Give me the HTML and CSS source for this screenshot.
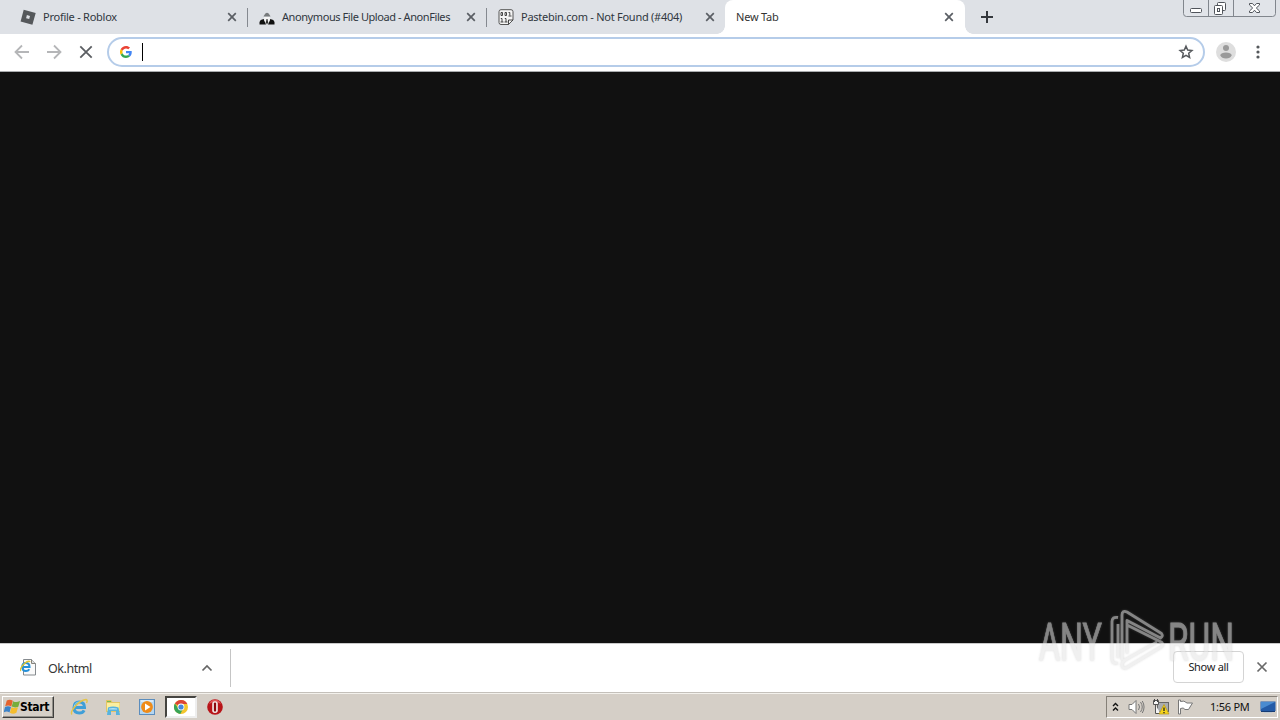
FILE: index.html
```html
<!DOCTYPE html>
<html lang="en">
<head>
<meta charset="utf-8">
<title>New Tab</title>
<link rel="stylesheet" href="styles.css">
</head>
<body>
<div class="screen">
  <header class="tabstrip">
    <div class="tab first">
      <svg class="favicon" viewBox="0 0 16 16"><path fill="#55585b" fill-rule="evenodd" d="M3.7.7 15.7 4 12.4 15.7.6 12.5zM6.9 6.1 6.1 9.2l3.1.8.8-3.1z"/></svg>
      <span class="title t-roblox">Profile - Roblox</span>
      <svg class="close" viewBox="0 0 10 10"><path d="M1.2 1.2l7.6 7.6M8.8 1.2L1.2 8.8"/></svg>
    </div>
    <div class="tab">
      <svg class="favicon" viewBox="0 0 16 16"><path fill="#111" d="M.5 15.500v-2.500l1.200-2 3-1L7 15.500zM15.500 15.500v-2.500l-1.200-2-3-1L9 15.500z"/><path fill="#f4f4f4" d="M5 8h6l-.5 4L8 15.500 5.500 12z"/><path fill="#777a7c" d="M5.300 6Q8 1.500 10.700 6l.8 1.500h-7z"/><path fill="#333" d="M7.500 10h1l.7 3.500L8 15.500l-1.200-2z"/></svg>
      <span class="title t-anon">Anonymous File Upload - AnonFiles</span>
      <svg class="close" viewBox="0 0 10 10"><path d="M1.200 1.200l7.600 7.600M8.800 1.200L1.200 8.800"/></svg>
    </div>
    <div class="tab last">
      <svg class="favicon" viewBox="0 0 16 16"><path fill="#f5f5f5" stroke="#555" d="M3 .7h10q2 0 2 2V11l-4.500 4.500H3q-2 0-2-2V2.700q0-2 2-2z"/><path fill="none" stroke="#333" stroke-width=".9" d="M3 3.500h1.500v3H3zM7 3.500h1.500v3H7zM10.500 3.500h1.300v3M10.500 7h3M2.800 9.500H4v3.500M2.500 13h3M6.800 9.500H8v3.500M6.500 13h3M10.500 15.500V11H15"/></svg>
      <span class="title t-paste">Pastebin.com - Not Found (#404)</span>
      <svg class="close" viewBox="0 0 10 10"><path d="M1.200 1.200l7.600 7.600M8.800 1.200L1.200 8.800"/></svg>
    </div>
    <div class="tab active">
      <span class="title t-new">New Tab</span>
      <svg class="close" viewBox="0 0 10 10"><path d="M1.200 1.200l7.600 7.600M8.800 1.200L1.200 8.800"/></svg>
    </div>
    <svg class="plus" viewBox="0 0 12 12"><path d="M6 0v12M0 6h12"/></svg>
    <svg class="winctl" viewBox="0 0 94 18"><path fill="#e1e4e9" stroke="#81868d" d="M.5-1v14.500q0 3 3 3h86q3 0 3-3V-1zM25.500 0v16M50.500 0v16"/><g fill="#fff" stroke="#50545b"><rect x="7.500" y="8.500" width="11" height="4" rx="1"/><rect x="34.500" y="2.500" width="8" height="8" rx="1"/><rect x="31.500" y="5.500" width="8" height="9" rx="1"/><rect x="34.500" y="8.500" width="2" height="3"/><path d="M66.500 3.500h3l2 2.300 2-2.300h3v1.500l-3.200 3 3.200 3v1.500h-3l-2-2.300-2 2.300h-3V11l3.200-3-3.200-3z"/></g></svg>
  </header>
  <div class="toolbar">
    <svg class="nav" viewBox="0 0 16 16"><path stroke="#b5b6b8" d="M15 8H2M8 1.500L1.500 8 8 14.500"/></svg>
    <svg class="nav" viewBox="0 0 16 16"><path stroke="#b5b6b8" d="M1 8h13M8 1.500L14.500 8 8 14.500"/></svg>
    <svg class="nav" viewBox="0 0 16 16"><path stroke="#5b5e62" d="M2.300 2.300l11.400 11.400M13.700 2.300L2.300 13.700"/></svg>
    <div class="omnibox">
      <svg class="google" viewBox="0 0 48 48"><path fill="#ea4335" d="M24 9.500c3.540 0 6.710 1.220 9.210 3.600l6.850-6.850C35.900 2.380 30.470 0 24 0 14.620 0 6.510 5.380 2.560 13.220l7.980 6.190C12.430 13.720 17.740 9.500 24 9.500z"/><path fill="#4285f4" d="M46.980 24.550c0-1.570-.15-3.090-.38-4.550H24v9.020h12.940c-.58 2.960-2.260 5.480-4.780 7.180l7.730 6c4.510-4.180 7.090-10.360 7.090-17.650z"/><path fill="#fbbc05" d="M10.530 28.590A14.500 14.500 0 0 1 10.530 19.410l-7.980-6.190A24 24 0 0 0 2.560 34.780z"/><path fill="#34a853" d="M24 48c6.480 0 11.930-2.130 15.890-5.810l-7.730-6c-2.150 1.450-4.920 2.300-8.160 2.300-6.260 0-11.570-4.220-13.470-9.910l-7.980 6.190C6.510 42.620 14.620 48 24 48z"/></svg>
      <span class="caret"></span>
      <svg class="star" viewBox="0 0 16 16"><path d="M8 2.200l1.700 3.900 4.200.4-3.200 2.800.9 4.200L8 11.300l-3.600 2.200.9-4.200-3.200-2.800 4.200-.4z"/></svg>
    </div>
    <svg class="avatar" viewBox="0 0 20 20"><circle cx="10" cy="10" r="10" fill="#dedede"/><circle cx="10" cy="5.900" r="3" fill="#9a9a9a"/><path fill="#9a9a9a" d="M4.200 13.200q1-2.700 5.800-2.700t5.800 2.700q-1.500 3.300-5.800 3.300t-5.800-3.300z"/></svg>
    <svg class="dots" viewBox="0 0 4 14"><circle cx="2" cy="2" r="1.600"/><circle cx="2" cy="7" r="1.600"/><circle cx="2" cy="12" r="1.600"/></svg>
  </div>
  <main class="page"></main>
  <section class="shelf">
    <div class="download">
      <svg class="file" viewBox="0 0 17 17"><path fill="#fafafa" stroke="#858a8e" d="M3.500.5h8l4 4v11.500h-12z"/><path fill="#ddd" stroke="#85837c" d="M11.500.5v4h4"/><path fill="none" stroke="#2490d9" stroke-width="2.100" d="M2.500 8h7q0-4-3.600-4T2.300 8q0 4 3.600 4 2.300 0 3.400-1.700"/><path fill="none" stroke="#e1c52e" stroke-width="1.300" d="M1 12q-2-1.500 2.500-6.500Q8 1 10.200 2.700"/></svg>
      <span class="fname">Ok.html</span>
      <svg class="chev" viewBox="0 0 12 8"><path d="M1.500 6.500L6 2l4.500 4.500"/></svg>
    </div>
    <button class="showall">Show all</button>
    <svg class="shelfx" viewBox="0 0 12 12"><path d="M1.500 1.500l9 9M10.500 1.500l-9 9"/></svg>
  </section>
  <footer class="taskbar">
    <div class="start">
      <svg class="flag" viewBox="0 0 16 16"><path fill="#e5622d" d="M2.800 1.500q3-1.500 6 .2L7.300 7.500Q4.500 5.500 1.200 7.200z"/><path fill="#76ad3c" d="M9.200 2.200Q12 4 16 2l-1.700 5.700q-3.300 1.500-6.600-.1z"/><path fill="#3c83c8" d="M1 8q3-1.600 6 0l-1.500 5.500Q2.700 11.700-.4 13.500z"/><path fill="#f5bd2d" d="M7.500 8.300q3 1.500 6.500 0l-1.600 5.500q-3.300 1.700-6.500 0z"/></svg>
      <span>Start</span>
    </div>
    <svg class="app" viewBox="0 0 18 18"><path fill="none" stroke="#3f9fd8" stroke-width="3" d="M4 9.500h10.500Q14.500 4 9.300 4T4 9.500Q4 15 9.300 15q3.500 0 4.800-2.700"/><path fill="none" stroke="#96d9f1" d="M4 9q1-5 5.500-5"/><path fill="none" stroke="#e5c447" stroke-width="1.400" d="M2 16.500q-2-2 3-8t11-7q2 .5.500 3.500"/></svg>
    <svg class="app" viewBox="0 0 18 18"><path fill="#e3c566" d="M2 2h5l1.500 2H16v10H2z"/><path fill="#fbef9f" d="M3 5h12.500v8H3z"/><path fill="#76bc53" d="M3 3h4v1H3z"/><path fill="#57b3de" d="M4 9.500q5-2 10.500 0L16 17h-4v-4H7v4H3z"/><path fill="#b7e3f3" d="M5 10.500q4-1 8 0v1H5z"/></svg>
    <svg class="app" viewBox="0 0 18 18"><rect x="1.500" y="1.500" width="15" height="15" fill="#b4d6f1" stroke="#5b8dbd"/><path stroke="#fff" d="M3 3h12"/><circle cx="9" cy="9" r="5.900" fill="#ef8b18"/><path fill="#fff" d="M7 5.500l5.500 3.500L7 12.500z"/></svg>
    <div class="running"><svg viewBox="0 0 16 16"><circle cx="8" cy="8" r="7" fill="#f3c52d"/><path fill="#dc4435" d="M8 8L1.900 4.500A7 7 0 0 1 14.300 5H8z"/><path fill="#38a457" d="M1.900 4.500A7 7 0 0 0 7.300 15L10 10 8 8 5 9z"/><circle cx="8" cy="8" r="3.400" fill="#fff"/><circle cx="8" cy="8" r="2.600" fill="#4587dd"/></svg></div>
    <svg class="app opera" viewBox="0 0 18 18"><circle cx="9" cy="9" r="7.800" fill="#b81419"/><path fill="#df5557" d="M3 6q1.500-4.300 6-4.300T15 6Q12 4 9 4T3 6z"/><rect x="6.200" y="3.300" width="5.600" height="11.600" rx="2.600" fill="#f1e9e7"/><rect x="7.900" y="4.500" width="2.200" height="9.200" rx="1.100" fill="#8c090e"/></svg>
    <div class="tray">
      <svg class="up" viewBox="0 0 7 10"><path d="M1 4l2.500-2.500L6 4M1 8.500L3.500 6 6 8.500"/></svg>
      <svg class="ti spk" viewBox="0 0 17 16"><path fill="#fff" stroke="#777" d="M1 5.500h3l4-4v13l-4-4H1z"/><path fill="none" stroke="#777" d="M10.500 5q2 3 0 6M12.500 3q3.500 5 0 10M14.300 2q3.500 6 0 12"/></svg>
      <svg class="ti net" viewBox="0 0 17 16"><rect x="4.500" y="3.500" width="11" height="9" fill="#a9acb0" stroke="#666"/><path fill="#f5f5f5" stroke="#555" d="M.5 1.500h5v4h-5zM2.500 6v8.500h5"/><path stroke="#444" d="M1.500 0v3M4.500 0v3"/><path fill="#f6d51b" stroke="#b89714" stroke-width=".7" d="M11 5.500l5 9.500H6z"/><path stroke="#222" stroke-width="1.300" d="M11 8.500v3.500M11 13v1.200"/></svg>
      <svg class="ti act" viewBox="0 0 17 16"><path fill="#fff" stroke="#777" d="M1.500 1v14h2V9.500q3-1.500 4.500 1h3.500l4-6.500H10Q7 1 3.500 2.500V1z"/></svg>
      <span class="clock">1:56 PM</span>
      <svg class="desk" viewBox="0 0 16 13"><path fill="#245ba7" d="M.5.500h15V10H.5z"/><path fill="#4a8bd0" d="M1 1h14L1 8z"/><path fill="#173c73" d="M1 10h14v1H1z"/><path fill="#bfc8d0" d="M4 11h8v1H4z"/></svg>
    </div>
  </footer>
  <svg class="watermark" viewBox="0 0 204 72">
    <g class="wm-text"><text x="7" y="57" textLength="63" lengthAdjust="spacingAndGlyphs">ANY</text><text x="136" y="57" textLength="66" lengthAdjust="spacingAndGlyphs">RUN</text></g>
    <path class="wm-logo" d="M86 14.500q-6-1-6 4v37q0 6 6 4.500M86 21v34M90 57V12q0-5 5-3l34.500 21.500q2 2.500-1 4.500L95 17.500v33M95 22l35 17.500q2 2.500-1 4.500L94 65q-4 1-4-3 0-3 3-5l32-18"/>
  </svg>
</div>
</body>
</html>
```
FILE: styles.css
```css
*{box-sizing:border-box}
body{margin:0;overflow:hidden;background:#111}
svg{display:block;flex:none}
.screen{position:relative;width:1280px;height:720px;display:flex;flex-direction:column;font-family:"Noto Sans",sans-serif;font-size:11px;color:#303740;white-space:nowrap}
.tabstrip{height:34px;flex:none;display:flex;background:#dee1e6}
.tab{width:239px;height:34px;padding:0 11px 0 11px;display:flex;align-items:center;position:relative}
.tab.first{width:248px;padding-left:20px}
.tab:not(.active):not(.last)::after{content:"";position:absolute;right:0;top:8px;width:1px;height:19px;background:#858990}
.tab.last{width:238px;padding-right:10px}
.tab.active{width:240px;background:#fff;border-radius:8px 8px 0 0}
.tab.active::before,.tab.active::after{content:"";position:absolute;bottom:0;width:8px;height:8px}
.tab.active::before{left:-8px;background:radial-gradient(circle at 0 0,#dee1e6 7.500px,#fff 8px)}
.tab.active::after{right:-8px;background:radial-gradient(circle at 100% 0,#dee1e6 7.500px,#fff 8px)}
.favicon{width:16px;height:16px;margin-right:7px}
.title{line-height:16px;flex:1}
.t-roblox{letter-spacing:-.25px}
.t-anon{letter-spacing:-.42px}
.t-paste{letter-spacing:-.26px}
.t-new{letter-spacing:-.2px;color:#333}
.close{width:10px;height:10px;fill:none;stroke:#5a5e64;stroke-width:1.700}
.plus{width:12px;height:12px;margin:11px 0 0 16px;stroke:#34383d;stroke-width:2}
.winctl{width:94px;height:18px;margin-left:auto;margin-right:3px}
.toolbar{height:38px;flex:none;background:#fff;border-bottom:1px solid #aaacae;display:flex;align-items:center;padding:0 20px 1px 14px}
.nav{width:16px;height:16px;margin-right:16px;fill:none;stroke-width:1.800}
.nav:nth-child(3){margin-right:13px}
.omnibox{width:1098px;height:30px;border:2px solid #b5cce9;border-radius:15px;display:flex;align-items:center;padding:0 9px 0 11px}
.google{width:12px;height:12px}
.caret{width:1px;height:18px;background:#000;margin-left:10px}
.star{width:16px;height:16px;margin-left:auto;fill:none;stroke:#56595d;stroke-width:1.500}
.avatar{width:20px;height:20px;margin-left:11px}
.dots{width:4px;height:14px;margin-left:20px;fill:#55585b}
.page{flex:1;background:#111}
.shelf{height:49px;flex:none;background:#fff;border-top:1px solid #c9c9c9;display:flex;align-items:center}
.download{width:231px;height:38px;margin-top:-1px;border-right:1px solid #c5c5c5;display:flex;align-items:center;padding-left:20px}
.file{width:17px;height:17px;margin-top:-1px}
.fname{width:44px;margin-left:11px;font-size:12.500px;letter-spacing:-.45px;line-height:18px;padding-top:2px;color:#343434}
.chev{width:12px;height:8px;margin-left:109px;fill:none;stroke:#666;stroke-width:1.700}
.showall{margin:-2px 0 0 auto;width:71px;height:32px;border:1px solid #d4d4d4;border-radius:4px;background:#fff;font:11px "Noto Sans",sans-serif;letter-spacing:-.3px;color:#222;padding:0 0 1px}
.shelfx{width:12px;height:12px;margin:-2px 12px 0 12px;stroke:#696969;stroke-width:1.700}
.taskbar{height:28px;flex:none;background:#d5cfc7;border-top:1px solid #c4c0ba;box-shadow:inset 0 1px #f3f1ec;display:flex;align-items:flex-start;padding:3px 2px 0 2px}
.start{width:52px;height:22px;border:1px solid;border-color:#fff #3f3e3c #3f3e3c #fff;box-shadow:inset -1px -1px #929089;display:flex;align-items:center;padding-left:1px;color:#000;font:bold 12px "DejaVu Sans Condensed","DejaVu Sans",sans-serif;letter-spacing:-.35px}
.flag{width:16px;height:16px}
.app{width:18px;height:18px;margin-top:2px;margin-left:16px}
.start + .app{margin-left:16px}
.running{width:32px;height:22px;margin-left:9px;background:#fff;border:2px solid;border-color:#454440 #eee #eee #454440;display:flex;align-items:center;justify-content:center}
.running svg{width:16px;height:16px}
.app.opera{margin-left:9px}
.tray{margin-left:auto;width:172px;height:22px;border:1px solid;border-color:#858078 #fff #fff #858078;display:flex;align-items:center;padding-left:5px;color:#111}
.up{width:7px;height:10px;fill:none;stroke:#111;stroke-width:1.400}
.ti{width:17px;height:16px}
.spk{margin-left:9px}
.net{margin-left:8px}
.act{margin-left:7px}
.clock{width:42px;margin-left:16px;line-height:16px;letter-spacing:-.25px}
.desk{width:16px;height:13px;margin-left:8px}
.watermark{position:absolute;left:1032px;top:603px;width:204px;height:72px;opacity:.55;filter:drop-shadow(0 0 1px #9999)}
.wm-text{font:51px "Roboto",sans-serif;fill:#e4e4e4;stroke:#e4e4e4;stroke-width:.8}
.wm-logo{fill:none;stroke:#e4e4e4;stroke-width:2.800;stroke-linejoin:round}
```
